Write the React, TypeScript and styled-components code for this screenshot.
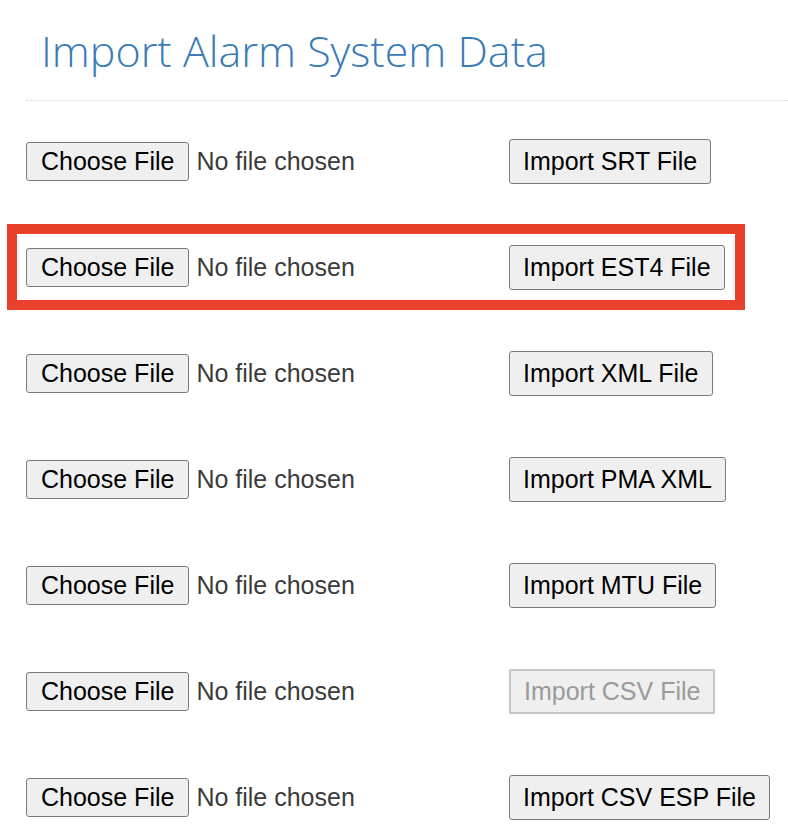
import React from "react";
import styled, { createGlobalStyle } from "styled-components";

const GlobalStyle = createGlobalStyle`
  html, body {
    margin: 0;
    padding: 0;
    background: #ffffff;
  }
  body {
    font-family: "Liberation Sans", Arial, sans-serif;
    color: #333333;
  }
`;

const Page = styled.div`
  padding: 0 0 40px 26px;
  width: 762px;
`;

const Header = styled.div`
  padding: 23px 0 21px 15px;
  border-bottom: 1px dotted #d8d8d8;
`;

const Title = styled.h1`
  margin: 0;
  font-family: "Open Sans", "Liberation Sans", sans-serif;
  font-weight: 300;
  font-size: 43px;
  line-height: 56px;
  color: #3a7bb8;
`;

const Rows = styled.div`
  display: flex;
  flex-direction: column;
  gap: 58px;
  padding-top: 36px;
`;

const Row = styled.form<{ $highlight?: boolean }>`
  display: grid;
  grid-template-columns: 483px auto;
  align-items: center;
  width: 700px;
  padding: 1.5px 0;
  outline: ${(p) => (p.$highlight ? "10px solid #e8402a" : "none")};
  outline-offset: 9px;
`;

const Picker = styled.div`
  display: flex;
  align-items: center;
  gap: 7px;
`;

const ChooseButton = styled.button`
  font-family: "Liberation Sans", Arial, sans-serif;
  font-size: 25px;
  color: #000;
  background: #efefef;
  border: 1px solid #7b7b7b;
  border-radius: 3px;
  height: 39px;
  padding: 0 14px;
  white-space: nowrap;
  cursor: pointer;
`;

const NoFile = styled.span`
  font-size: 25px;
  color: #3b3b3b;
  white-space: nowrap;
`;

const ImportButton = styled.button`
  justify-self: start;
  font-family: "Liberation Sans", Arial, sans-serif;
  font-size: 25px;
  color: #000;
  background: #efefef;
  border: 1px solid #7b7b7b;
  border-radius: 3px;
  height: 45px;
  padding: 0 13px;
  white-space: nowrap;
  cursor: pointer;

  &:disabled {
    color: #9a9a9a;
    border: 2px solid #c6c6c6;
    border-radius: 1px;
    cursor: default;
  }
`;

const imports = [
  { label: "Import SRT File" },
  { label: "Import EST4 File", highlight: true },
  { label: "Import XML File" },
  { label: "Import PMA XML" },
  { label: "Import MTU File" },
  { label: "Import CSV File", disabled: true },
  { label: "Import CSV ESP File" },
];

export default function App() {
  return (
    <>
      <GlobalStyle />
      <Page>
        <Header>
          <Title>Import Alarm System Data</Title>
        </Header>
        <Rows>
          {imports.map((item) => (
            <Row key={item.label} $highlight={item.highlight} onSubmit={(e) => e.preventDefault()}>
              <Picker>
                <ChooseButton type="button">Choose File</ChooseButton>
                <NoFile>No file chosen</NoFile>
              </Picker>
              <ImportButton type="submit" disabled={item.disabled}>
                {item.label}
              </ImportButton>
            </Row>
          ))}
        </Rows>
      </Page>
    </>
  );
}
